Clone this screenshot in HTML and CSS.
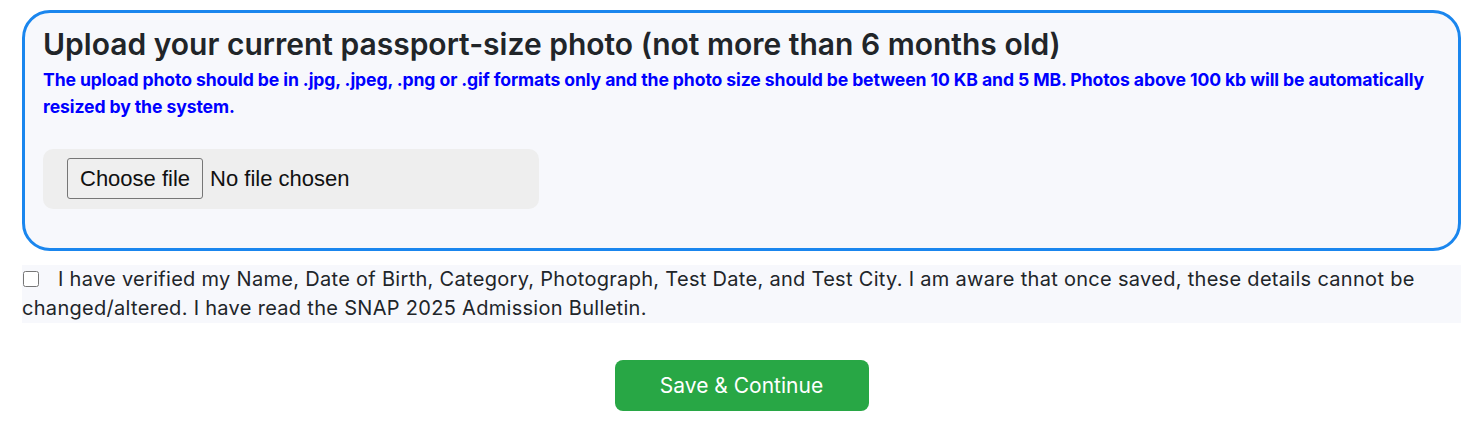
FILE: index.html
```html
<!DOCTYPE html>
<html lang="en">
<head>
    <meta charset="UTF-8">
    <meta name="viewport" content="width=device-width, initial-scale=1.0">
    <title>Photo Upload</title>
    <link rel="stylesheet" href="styles.css">
</head>
<body>
    <div class="page">
        <div class="upload-box">
            <h3 class="upload-title">Upload your current passport-size photo (not more than 6 months old)</h3>
            <p class="upload-note">The upload photo should be in .jpg, .jpeg, .png or .gif formats only and the photo size should be between 10 KB and 5 MB. Photos above 100 kb will be automatically resized by the system.</p>
            <label class="file-wrap">
                <input type="file" class="file-input">
                <span class="file-btn">Choose file</span>
                <span class="file-name">No file chosen</span>
            </label>
        </div>
        <div class="declaration">
            <input type="checkbox" class="declare-check">
            I have verified my Name, Date of Birth, Category, Photograph, Test Date, and Test City. I am aware that once saved, these details cannot be changed/altered. I have read the SNAP 2025 Admission Bulletin.
        </div>
        <div class="actions">
            <button class="save-btn">Save &amp; Continue</button>
        </div>
    </div>
</body>
</html>
```
FILE: styles.css
```css
body {
    margin: 0;
    background: #ffffff;
    font-family: Inter, "Noto Sans", sans-serif;
    color: #212529;
}

.page {
    width: 1439px;
    padding: 10px 0 0 22px;
}

.upload-box {
    border: 3px solid #1a86ee;
    border-radius: 28px;
    background: #f7f8fc;
    padding: 13px 18px 39px 18px;
}

.upload-title {
    font-size: 30px;
    font-weight: 600;
    line-height: 36px;
    margin: 0 0 4px 0;
    color: #212529;
}

.upload-note {
    font-size: 17.6px;
    font-weight: 700;
    line-height: 27px;
    letter-spacing: -0.1px;
    color: #0000ff;
    margin: 0;
}

.file-wrap {
    margin-top: 29px;
    width: 448px;
    height: 41px;
    padding: 9px 24px 10px 24px;
    background: #eeeeee;
    border-radius: 10px;
    display: flex;
    align-items: center;
    font-family: "Liberation Sans", Arial, sans-serif;
    font-size: 22px;
    color: #111;
    cursor: pointer;
}

.file-input {
    display: none;
}

.file-btn {
    box-sizing: border-box;
    height: 41px;
    line-height: 39px;
    padding: 0 12px;
    margin-right: 7px;
    border: 1px solid #767676;
    border-radius: 3px;
    background: #efefef;
}

.declaration {
    margin-top: 14px;
    background: #f7f8fc;
    font-size: 20px;
    line-height: 29px;
    letter-spacing: 0.3px;
    color: #212529;
    font-weight: 400;
}

.declare-check {
    width: 16px;
    height: 16px;
    margin: 0 13px 0 1px;
    vertical-align: -1px;
}

.actions {
    display: flex;
    justify-content: center;
    margin-top: 37px;
}

.save-btn {
    width: 254px;
    height: 51px;
    border: none;
    border-radius: 8px;
    background: #28a745;
    color: #ffffff;
    font-family: Inter, "Noto Sans", sans-serif;
    font-size: 21px;
}
```
